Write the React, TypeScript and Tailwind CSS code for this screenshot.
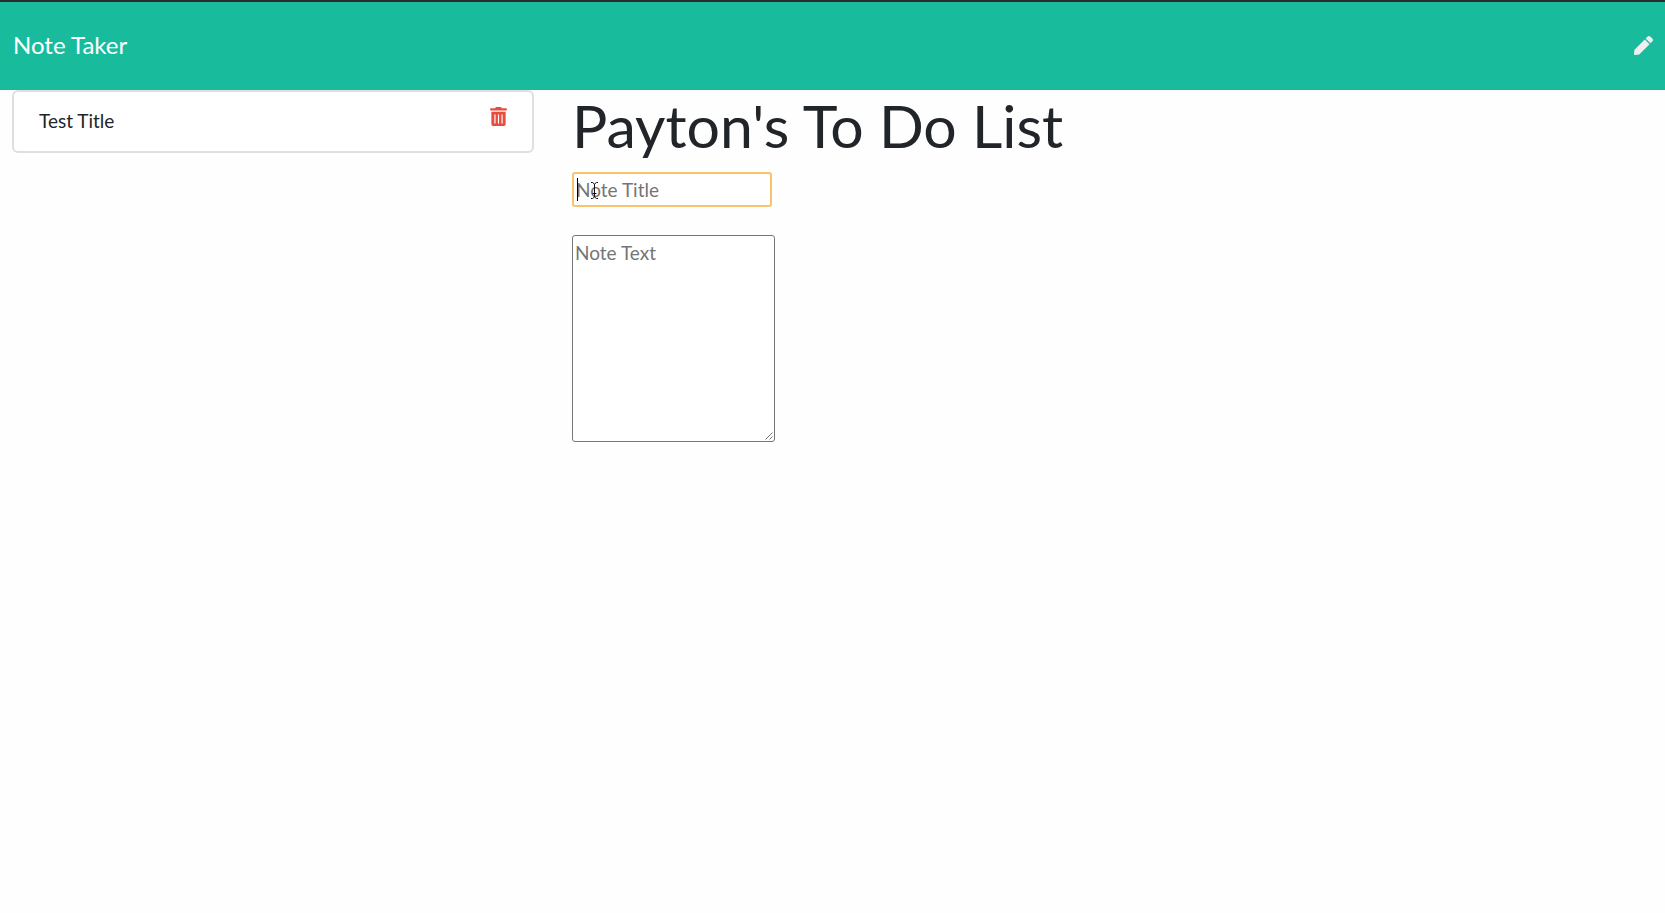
import { useState } from "react";
import { FaPen, FaTrashAlt } from "react-icons/fa";

export default function App() {
  const [notes, setNotes] = useState(["Test Title"]);
  const [title, setTitle] = useState("");
  const [text, setText] = useState("");

  return (
    <div className="min-h-screen bg-[#fefefe] font-['Lato','Liberation_Sans',sans-serif] text-[19px] leading-7 text-[#212529]">
      <nav className="flex h-[90px] items-center justify-between border-t-2 border-[#2b2b2e] bg-[#18bc9c] px-3 pb-0.5">
        <a href="#" className="pl-px text-2xl text-white">
          Note Taker
        </a>
        <button
          type="button"
          aria-label="New note"
          className="text-[19px] text-[#ecf0f1]"
          onClick={() => {
            setTitle("");
            setText("");
          }}
        >
          <FaPen />
        </button>
      </nav>

      <main className="grid grid-cols-[1fr_2fr]">
        <ul className="pr-[21px] pl-3">
          {notes.map((note) => (
            <li
              key={note}
              className="flex h-[63px] items-start justify-between rounded-md border-2 border-[#dfdfdf] bg-white py-[15px] pr-6 pl-[25px]"
            >
              <span>{note}</span>
              <button
                type="button"
                aria-label="Delete note"
                className="text-[19px] text-[#e74c3c]"
                onClick={() => setNotes(notes.filter((n) => n !== note))}
              >
                <FaTrashAlt />
              </button>
            </li>
          ))}
        </ul>

        <section className="flex flex-col items-start px-[17px]">
          <h1 className="text-[59px] leading-[72px]">Payton's To Do List</h1>
          <div className="relative mt-2.5">
            <input
              type="text"
              aria-label="Note Title"
              placeholder="Note Title"
              value={title}
              onChange={(e) => setTitle(e.target.value)}
              className="block h-[35px] w-[200px] rounded-[3px] border-2 border-[#f7c36c] bg-white px-0.5 outline-none placeholder:text-[#757575]"
            />
            <span className="pointer-events-none absolute top-1.5 left-[5px] h-[23px] w-px bg-black" />
            <svg
              aria-hidden="true"
              viewBox="0 0 9 17"
              className="pointer-events-none absolute top-2.5 left-[18px] h-[17px] w-[9px]"
              fill="none"
              stroke="#111"
            >
              <path d="M1 .5h1.5l2 1.5 2-1.5H8M4.5 2v13M1 16.5h1.5l2-1.5 2 1.5H8M2.5 11.5h4" />
            </svg>
          </div>
          <div className="relative mt-7">
            <textarea
              aria-label="Note Text"
              placeholder="Note Text"
              value={text}
              onChange={(e) => setText(e.target.value)}
              className="block h-[207px] w-[203px] resize rounded-[3px] border border-[#767676] bg-white px-0.5 py-[3px] outline-none placeholder:text-[#757575] [&::-webkit-resizer]:bg-transparent"
            />
            <svg
              aria-hidden="true"
              viewBox="0 0 8 8"
              className="pointer-events-none absolute right-0.5 bottom-0.5 size-2"
              fill="none"
              stroke="#555"
              strokeWidth="0.8"
            >
              <path d="M.5 7.5l7-7M4.5 7.5l3-3" />
            </svg>
          </div>
        </section>
      </main>
    </div>
  );
}
